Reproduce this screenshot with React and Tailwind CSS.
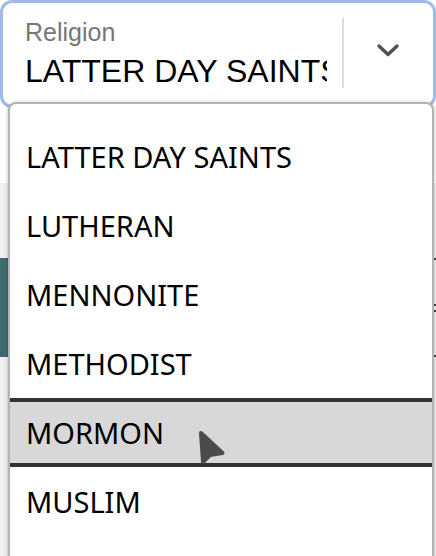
import React from "react";

const items = ["LATTER DAY SAINTS", "LUTHERAN", "MENNONITE", "METHODIST", "MORMON", "MUSLIM"];

export default function App() {
  return (
    <div className="relative w-[436px] h-[556px] overflow-hidden bg-white">
      {/* select box */}
      <div className="h-[108px] rounded-[12px] border-[3px] border-[#a0b9ef] bg-white flex">
        <div className="w-[324px] pl-[22px] pt-[15px] overflow-hidden" style={{ fontFamily: '"Liberation Sans", Arial, sans-serif' }}>
          <div className="text-[25px] leading-[28px] text-[#767676]">Religion</div>
          <div className="mt-[7px] text-[32px] leading-[36px] text-black whitespace-nowrap overflow-hidden">LATTER DAY SAINTS</div>
        </div>
        <div className="ml-[15px] mt-[15px] h-[70px] w-[2px] bg-[#dcdcdc]" />
        <div className="flex-1 flex items-start justify-center pt-[39px] pr-[2px]">
          <svg width="26" height="16" viewBox="0 0 26 16">
            <path d="M4 4 L13 12.5 L22 4" fill="none" stroke="#505050" strokeWidth="3.4" strokeLinecap="round" strokeLinejoin="round" />
          </svg>
        </div>
      </div>

      {/* background page content */}
      <div className="h-[75px]" />
      <div className="bg-[#efefef] h-[400px] flex flex-col">
        <div className="h-[75px]" />
        <div className="h-[99px] flex justify-between">
          <div className="w-[120px] bg-[#3f6b6c]" />
          <div className="w-[40px] flex flex-col justify-between">
            <div className="h-[2px] bg-[#444]" />
            <div className="flex flex-col gap-[4px]">
              <div className="h-[2px] bg-[#444]" />
              <div className="h-[2px] bg-[#444]" />
            </div>
            <div className="h-[2px] bg-[#444]" />
          </div>
        </div>
      </div>

      {/* dropdown menu overlay */}
      <div className="absolute left-[8px] top-[102px] w-[426px] h-[480px] rounded-t-[8px] border-2 border-[#b4b4b4] bg-white shadow-[0_1px_4px_rgba(0,0,0,0.25)] pt-[18px]" style={{ fontFamily: '"Noto Sans", "Open Sans", sans-serif' }}>
        {items.map((it) => {
          const active = it === "MORMON";
          return (
            <div
              key={it}
              className={
                active
                  ? "h-[69px] flex items-center pl-[16px] text-[29px] text-black bg-[#d8d8d8] border-y-4 border-[#333333]"
                  : "h-[69px] flex items-center pl-[16px] text-[29px] text-black"
              }
            >
              {it}
            </div>
          );
        })}
      </div>

      {/* mouse cursor */}
      <svg className="absolute left-[196px] top-[428px]" width="32" height="38" viewBox="0 0 32 38">
        <path d="M5 5 L26.5 25 L14 27 L7 34 Z" fill="#4a4a4f" stroke="#4a4a4f" strokeWidth="4" strokeLinejoin="round" />
      </svg>
    </div>
  );
}
